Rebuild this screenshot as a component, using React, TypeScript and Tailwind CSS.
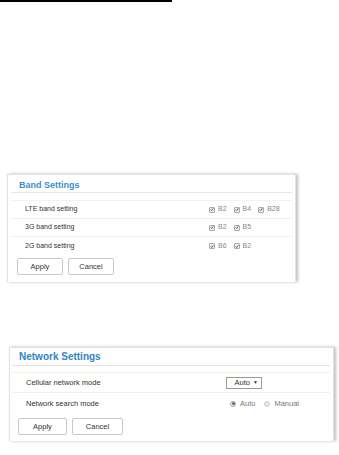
import React from "react";

const font = { fontFamily: '"Liberation Sans", Arial, sans-serif' };

function Check() {
  return (
    <span className="inline-flex h-[6px] w-[6px] items-center justify-center rounded-[1px] border border-[#aaa] bg-[#eee]">
      <svg viewBox="0 0 6 6" className="h-[5px] w-[5px]">
        <path d="M1 3 L2.5 4.5 L5 1.2" stroke="#444" strokeWidth="1.3" fill="none" />
      </svg>
    </span>
  );
}

function Band({ items }: { items: string[] }) {
  return (
    <div className="flex items-center gap-[3px]">
      {items.map((b) => (
        <span key={b} className="mr-[4px] flex items-center gap-[3px] text-[7px] text-[#888]">
          <Check />
          {b}
        </span>
      ))}
    </div>
  );
}

function Btn({ children, w }: { children: React.ReactNode; w: string }) {
  return (
    <div
      className={`flex h-[17px] items-center justify-center rounded-[2px] border border-[#c8c8c8] bg-white text-[7.5px] text-[#333] ${w}`}
    >
      {children}
    </div>
  );
}

export default function App() {
  return (
    <div className="relative h-[455px] w-[339px] bg-white" style={font}>
      <div className="h-[2px] w-[172px] bg-black" />

      {/* Band Settings */}
      <div className="ml-[7px] mt-[172px] h-[108px] w-[289px] border-x border-t border-[#e2e2e2] shadow-[2px_0_3px_rgba(0,0,0,0.25)]">
        <div className="mx-[3px] flex h-[18px] items-end border-b border-[#e6e6e6] px-[8px] pb-[2px]">
          <span className="text-[9px] font-bold leading-none text-[#3b8fcc]">Band Settings</span>
        </div>
        <div className="mx-[3px] mt-[7px] border-t border-[#f2f2f2]">
          <div className="flex h-[18px] items-center border-b border-[#f0f0f0] pl-[14px]">
            <span className="w-[184px] text-[7px] text-[#333]">LTE band setting</span>
            <Band items={["B2", "B4", "B28"]} />
          </div>
          <div className="flex h-[18px] items-center border-b border-[#f0f0f0] pl-[14px]">
            <span className="w-[184px] text-[7px] text-[#333]">3G band setting</span>
            <Band items={["B2", "B5"]} />
          </div>
          <div className="flex h-[18px] items-center pl-[14px]">
            <span className="w-[184px] text-[7px] text-[#333]">2G band setting</span>
            <Band items={["B6", "B2"]} />
          </div>
        </div>
        <div className="ml-[9px] mt-[3px] flex gap-[5px]">
          <Btn w="w-[46px]">Apply</Btn>
          <Btn w="w-[46px]">Cancel</Btn>
        </div>
      </div>

      {/* Network Settings */}
      <div className="ml-[9px] mt-[65px] h-[94px] w-[325px] border-x border-t border-[#e2e2e2] shadow-[2px_0_3px_rgba(0,0,0,0.25)]">
        <div className="mx-[3px] flex h-[18px] items-end border-b border-[#e2e2e2] px-[6px] pb-[3px]">
          <span className="text-[10px] font-bold leading-none text-[#2f86c4]">Network Settings</span>
        </div>
        <div className="mx-[3px] mt-[6px] border-t border-dotted border-[#ece6c8]">
          <div className="flex h-[20px] items-center border-b border-dotted border-[#ece6c8] pl-[13px]">
            <span className="w-[200px] text-[7.5px] text-[#333]">Cellular network mode</span>
            <span className="flex h-[12px] w-[36px] items-center justify-end gap-[3px] border border-[#999] pr-[3px] text-[7.5px] text-[#333]">
              Auto <span className="text-[5px]">▼</span>
            </span>
          </div>
          <div className="flex h-[21px] items-center pl-[13px]">
            <span className="w-[204px] text-[7.5px] text-[#333]">Network search mode</span>
            <span className="flex items-center gap-[4px] text-[7.5px] text-[#777]">
              <span className="flex h-[6px] w-[6px] items-center justify-center rounded-full border border-[#aaa] bg-[#eee]">
                <span className="h-[3px] w-[3px] rounded-full bg-[#666]" />
              </span>
              <span className="mr-[5px]">Auto</span>
              <span className="h-[6px] w-[6px] rounded-full border border-[#ccc] bg-[#e8e8e8]" />
              <span>Manual</span>
            </span>
          </div>
        </div>
        <div className="ml-[8px] mt-[4px] flex gap-[5px]">
          <Btn w="w-[49px]">Apply</Btn>
          <Btn w="w-[51px]">Cancel</Btn>
        </div>
      </div>
    </div>
  );
}
